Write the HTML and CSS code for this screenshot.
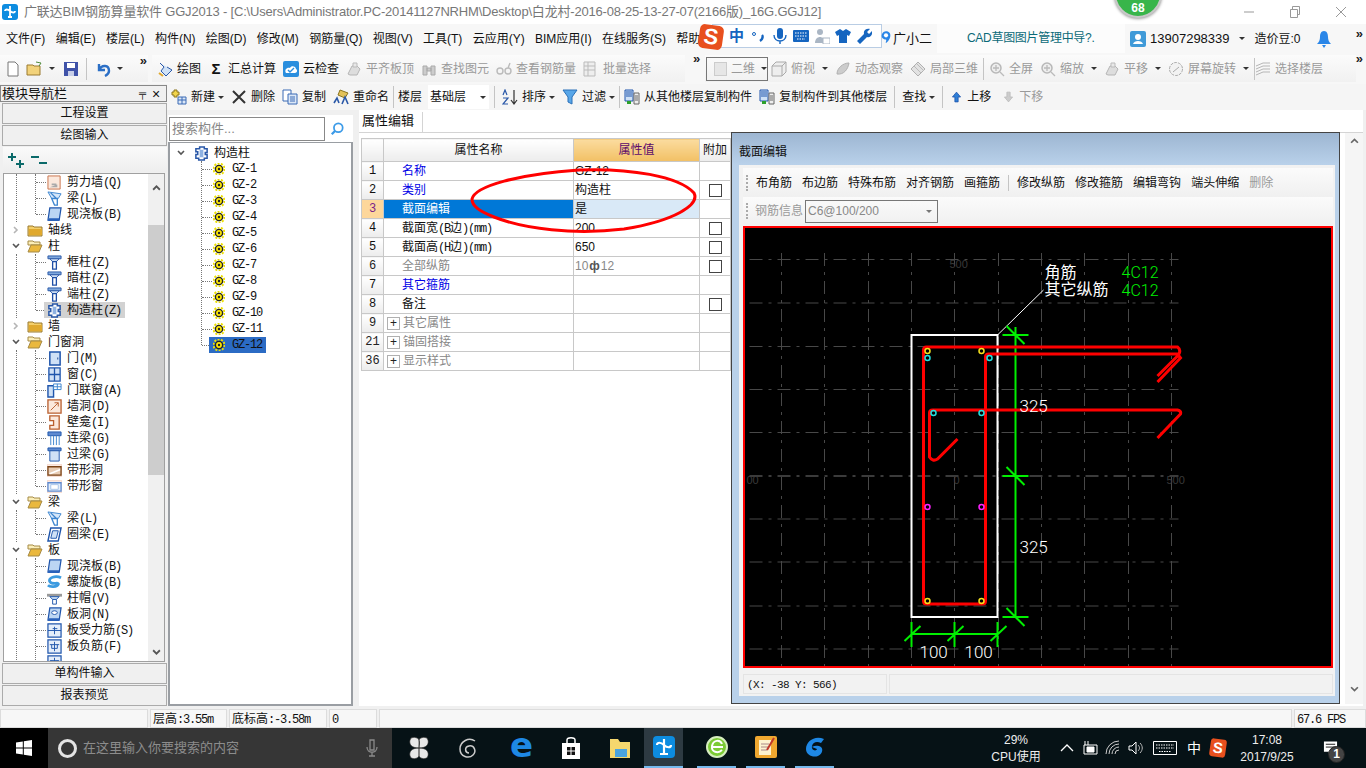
FILE: index.html

```html
<!DOCTYPE html>
<html lang="zh-CN">
<head>
  <meta charset="UTF-8" />
  <title>广联达BIM钢筋算量软件 GGJ2013</title>
  <link rel="stylesheet" href="styles.css">
</head>
<body>
  <!-- shared icons -->
  <svg class="defs" width="0" height="0">
    <symbol id="i-folder" viewBox="0 0 16 16"><path d="M1 4h5l1 1h8v9H1z" fill="#f4cf6a" stroke="#9a7a30"/><path d="M2 7h13v6H2z" fill="#e0a92e"/></symbol>
    <symbol id="i-open" viewBox="0 0 16 16"><path d="M1 3h5l1 1h6v3H1z" fill="#fbeeb8" stroke="#a58a45"/><path d="M1 14l3-7h11l-3 7z" fill="#eab83e" stroke="#a58a45"/></symbol>
    <symbol id="i-col" viewBox="0 0 16 16"><path d="M1 1h14v3H1z" fill="#7fa8dd" stroke="#2a58a8"/><path d="M3 4h10L10 7H6z" fill="#cfe0f5" stroke="#2a58a8"/><path d="M6 7h4v8H6z" fill="#fff" stroke="#1f4fa6" stroke-width="1.4"/></symbol>
    <symbol id="i-gz" viewBox="0 0 16 16"><path d="M6 1h5v2h3v4h-2v2h2v4h-3v2H5v-2H2V9h2V6H2V3h4z" fill="#fff" stroke="#2a58a8" stroke-width="1.6"/><path d="M6 4h4v8H6z" fill="#8fb2e2"/></symbol>
    <symbol id="i-beam" viewBox="0 0 16 16"><path d="M1 1l14 2-3 5H5z" fill="#d6e7f9" stroke="#3d85cf"/><path d="M5 8l3 7h3V8zM4 2l6 6" fill="none" stroke="#3d85cf" stroke-width="1.4"/></symbol>
    <symbol id="i-slab" viewBox="0 0 16 16"><path d="M3 1h12l-2 13H1z" fill="#bcd6f3" stroke="#1f55ac" stroke-width="1.3"/><path d="M2 12h11v3H1z" fill="#2a62bb"/></symbol>
    <symbol id="i-wall" viewBox="0 0 16 16"><path d="M1 1h13v14H1z" fill="#fbe8dc" stroke="#c9714a"/><path d="M3 13l8-3v3zM5 9h5v2H5z" fill="#aaa"/></symbol>
    <symbol id="i-door" viewBox="0 0 16 16"><path d="M3 1h11v14H3z" fill="#cfe1f6" stroke="#1f55ac" stroke-width="1.6"/><path d="M11 7h1v2h-1z" fill="#123f8e"/></symbol>
    <symbol id="i-win" viewBox="0 0 16 16"><path d="M2 1h12v14H2zM8 1v14M2 8h12" fill="#cfe1f6" stroke="#1f55ac" stroke-width="1.4"/></symbol>
    <symbol id="i-dw" viewBox="0 0 16 16"><path d="M1 3h6v12H1z" fill="#cfe1f6" stroke="#1f55ac" stroke-width="1.5"/><path d="M7 1h8v6H7zM11 1v6M7 4h8" fill="#fff" stroke="#3d85cf"/></symbol>
    <symbol id="i-hole" viewBox="0 0 16 16"><path d="M1 1h14v14H1z" fill="#fbe8dc" stroke="#b95f2f" stroke-width="1.4"/><path d="M4 12L12 4M8 4h4v4" fill="none" stroke="#b95f2f"/></symbol>
    <symbol id="i-niche" viewBox="0 0 16 16"><path d="M3 1h10v14H3V11h4V6H3z" fill="#fbe8dc" stroke="#b95f2f" stroke-width="1.4"/></symbol>
    <symbol id="i-link" viewBox="0 0 16 16"><path d="M1 1h14v4H1z" fill="#5d8ad0" stroke="#1f55ac"/><path d="M4 5v10M7 5v10M10 5v10M13 5v10" stroke="#3d85cf" fill="none"/></symbol>
    <symbol id="i-over" viewBox="0 0 16 16"><path d="M1 1h14v3H1z" fill="#5d8ad0" stroke="#1f55ac"/><path d="M3 4h10v11H3z" fill="#cfe1f6" stroke="#1f55ac"/></symbol>
    <symbol id="i-sh" viewBox="0 0 16 16"><path d="M0 2h16v12H0z" fill="#fff" stroke="#f2c8b4"/><path d="M1 4h14v9H1z" fill="#e8cdb5" stroke="#7a4316" stroke-width="1.4"/><path d="M2 11l12-5v2L4 12z" fill="#fff"/></symbol>
    <symbol id="i-sw" viewBox="0 0 16 16"><path d="M0 2h16v12H0z" fill="#fff" stroke="#f2c8b4"/><path d="M1 4h14v9H1z" fill="#e4eefa" stroke="#5d8ad0" stroke-width="1.4"/><path d="M4 6h8v5H4z" fill="#fff" stroke="#a8c4ea"/></symbol>
    <symbol id="i-ring" viewBox="0 0 16 16"><path d="M4 1h11l-3 14H1z" fill="#fff" stroke="#1f55ac" stroke-width="1.5"/><path d="M6 4h6l-2 8H4z" fill="#cfe1f6" stroke="#1f55ac"/></symbol>
    <symbol id="i-spiral" viewBox="0 0 16 16"><path d="M15 3C9 0 1 3 3 7s10 0 9 3-9 3-11 1" fill="none" stroke="#3d9be0" stroke-width="3"/></symbol>
    <symbol id="i-cap" viewBox="0 0 16 16"><path d="M0 3h16v3H0z" fill="#999"/><path d="M3 6h10l-3 3H6z" fill="#cfe1f6" stroke="#1f55ac"/><path d="M6 9h4v5H6z" fill="#fff" stroke="#1f55ac"/></symbol>
    <symbol id="i-shole" viewBox="0 0 16 16"><path d="M3 1h12l-2 13H1z" fill="#bcd6f3" stroke="#1f55ac" stroke-width="1.3"/><ellipse cx="8" cy="6" rx="3" ry="2" fill="#fff" stroke="#1f55ac"/><path d="M2 12h11v3H1z" fill="#2a62bb"/></symbol>
    <symbol id="i-srebar" viewBox="0 0 16 16"><path d="M1 1h14v14H1z" fill="#e4eefa" stroke="#1f55ac" stroke-width="1.3"/><path d="M1 8h14M8 4v8M6 6h5" fill="none" stroke="#1f55ac"/></symbol>
    <symbol id="i-neg" viewBox="0 0 16 16"><path d="M1 1h14v14H1z" fill="#e4eefa" stroke="#1f55ac" stroke-width="1.3"/><path d="M3 6h10M8 3v10M5 6v4h6V6" fill="none" stroke="#1f55ac"/></symbol>
    <symbol id="i-gear" viewBox="0 0 12 12"><circle cx="6" cy="6" r="5.500" fill="none" stroke="#eee000" stroke-width="2" stroke-dasharray="2 1.400"/><circle cx="6" cy="6" r="3.600" fill="#ffe800" stroke="#222" stroke-width="1.400"/><circle cx="6" cy="6" r="1.200" fill="#222"/></symbol>
    <symbol id="i-chev" viewBox="0 0 8 8"><path d="M1 2l3 3 3-3" fill="none" stroke="#555" stroke-width="1.600"/></symbol>
    <symbol id="i-chevr" viewBox="0 0 8 8"><path d="M2 1l3 3-3 3" fill="none" stroke="#b5b5b5" stroke-width="1.600"/></symbol>
    <symbol id="i-ghost" viewBox="0 0 16 16"><path d="M2 13l4-8h5l3 3-3 6H4z" fill="#ddd" stroke="#b5b5b5"/><path d="M7 2h4v4H7z" fill="#e8e8e8" stroke="#bbb"/></symbol>
    <symbol id="i-find" viewBox="0 0 16 16"><circle cx="7" cy="7" r="5" fill="#eee" stroke="#b8b8b8" stroke-width="1.500"/><path d="M11 11l4 4M7 4v6M4 7h6" stroke="#bbb" stroke-width="1.300" fill="none"/></symbol>
    <symbol id="i-copy" viewBox="0 0 16 16"><path d="M1 1h8v11H1z" fill="#cfe1f6" stroke="#1f55ac"/><path d="M2 3h6M2 5h6M2 7h6" stroke="#1f55ac" fill="none"/><path d="M10 4h5v11h-5z" fill="#eee" stroke="#666"/><path d="M11 7h3M11 9h3M11 11h3" stroke="#666" fill="none"/><path d="M3 12h4v3H3z" fill="#2ca02c"/></symbol>
  </svg>

  <div class="titlebar">
    <svg class="app-ico" viewBox="0 0 16 16"><rect width="16" height="16" rx="3" fill="#0d8ce0"/><path d="M8 2v11M3 7c0-2 3-2 5 0s5 2 5 0M6 13h4" fill="none" stroke="#fff" stroke-width="1.800"/></svg>
    <span class="doc-title">广联达BIM钢筋算量软件 GGJ2013 - [C:\Users\Administrator.PC-20141127NRHM\Desktop\白龙村-2016-08-25-13-27-07(2166版)_16G.GGJ12]</span>
    <div class="win-ctrls">
      <svg viewBox="0 0 12 12"><path d="M1 6h10" stroke="#999"/></svg>
      <svg viewBox="0 0 12 12"><path d="M1.500 3.500h7v8h-7zM3.500 3V.5h7v8H9" fill="none" stroke="#999"/></svg>
      <svg viewBox="0 0 12 12"><path d="M1 1l10 10M11 1L1 11" stroke="#999"/></svg>
    </div>
  </div>

  <div class="menubar">
    <div class="menu-items">
      <span>文件(F)</span><span>编辑(E)</span><span>楼层(L)</span><span>构件(N)</span><span>绘图(D)</span><span>修改(M)</span><span>钢筋量(Q)</span><span>视图(V)</span><span>工具(T)</span><span>云应用(Y)</span><span>BIM应用(I)</span><span>在线服务(S)</span><span>帮助</span>
    </div>
    <span class="assist">广小二</span>
    <div class="cad-tab">CAD草图图片管理中导?.</div>
    <div class="account">
      <svg class="ac-ico" viewBox="0 0 16 16"><rect width="16" height="16" rx="2" fill="#3f9ad8"/><circle cx="8" cy="6" r="3" fill="#fff"/><path d="M3 13c1-4 9-4 10 0z" fill="#fff"/></svg>
      <span>13907298339</span><i class="caret"></i><span class="beans">造价豆:0</span>
      <svg class="bell" viewBox="0 0 14 18"><path d="M7 1c3 0 4 3 4 6s1 5 3 7H0c2-2 3-4 3-7s1-6 4-6z" fill="#2a86e8"/><path d="M5 15h4l-2 3z" fill="#2a86e8"/></svg>
    </div>
    <span class="more">»</span>
  </div>

  <div class="tools1">
    <div class="band band-a">
      <svg class="ic" viewBox="0 0 16 16"><path d="M3 1h7l3 3v11H3z" fill="#fff" stroke="#777"/></svg>
      <svg class="ic ic-w" viewBox="0 0 18 16"><path d="M1 4h6l1 1h6v9H1z" fill="#f2d27a" stroke="#9a7a30"/><path d="M10 1l5 1-2 3" fill="none" stroke="#4e8a3a"/></svg>
      <i class="caret"></i>
      <svg class="ic save" viewBox="0 0 16 16"><path d="M1 1h14v14H1z" fill="#3f52a8"/><path d="M4 2h8v5H4z" fill="#fff"/><path d="M5 10h6v5H5z" fill="#c8cfe8"/></svg>
      <b class="sep"></b>
      <svg class="ic" viewBox="0 0 16 16"><path d="M3 3v6h6M3 9c3-6 10-5 10 1 0 3-2 4-4 5" fill="none" stroke="#2b6fc6" stroke-width="2.400"/></svg>
      <i class="caret"></i>
      <span class="more push">»</span>
    </div>
    <div class="band band-b">
      <div class="tb"><svg class="ic" viewBox="0 0 16 16"><path d="M3 2l4 4-3 4 5 5 6-6-5-3" fill="#cfe1f6" stroke="#2a58a8"/><path d="M2 12l4 3" stroke="#e0a92e" stroke-width="2"/></svg>绘图</div>
      <div class="tb"><span class="sigma">Σ</span>汇总计算</div>
      <div class="tb"><svg class="ic" viewBox="0 0 16 16"><rect width="16" height="16" rx="2" fill="#2a8ede"/><path d="M3 12c-2-3 1-6 4-5 1-3 6-2 6 1 2 1 1 4-1 4z" fill="#fff"/><path d="M5 9l2 2 4-4" fill="none" stroke="#2a8ede" stroke-width="1.400"/></svg>云检查</div>
      <div class="tb off"><svg class="ic"><use href="#i-ghost"/></svg>平齐板顶</div>
      <div class="tb off"><svg class="ic" viewBox="0 0 16 16"><path d="M2 5h4v9H2zM10 5h4v9h-4zM6 7h4v3H6z" fill="#ccc" stroke="#aaa"/></svg>查找图元</div>
      <div class="tb off"><svg class="ic" viewBox="0 0 16 16"><path d="M1 10a3 3 0 1 0 6 0 3 3 0 1 0-6 0M9 10a3 3 0 1 0 6 0 3 3 0 1 0-6 0M12 7l2-5" fill="none" stroke="#bbb" stroke-width="1.400"/></svg>查看钢筋量</div>
      <div class="tb off"><svg class="ic" viewBox="0 0 16 16"><path d="M1 1h11v14H1zM1 5h11M1 9h11M5 1v14" fill="#eee" stroke="#bbb"/></svg>批量选择</div>
    </div>
    <span class="more more-mid">»</span>
    <div class="band band-c">
      <div class="view-combo"><i class="swatch"></i><span>二维</span><i class="caret"></i></div>
      <div class="tb off"><svg class="ic" viewBox="0 0 16 16"><path d="M1 5l4-4h10v10l-4 4H1zM1 5h10v10M11 5l4-4" fill="#eee" stroke="#aaa"/></svg>俯视</div><i class="caret"></i>
      <div class="tb off"><svg class="ic" viewBox="0 0 16 16"><path d="M2 13c0-6 6-11 12-11-1 6-5 12-12 11z" fill="#ccc" stroke="#b0b0b0"/></svg>动态观察</div>
      <div class="tb off"><svg class="ic" viewBox="0 0 16 16"><path d="M1 8l7-7 7 7-7 7z" fill="#e2e2e2" stroke="#b0b0b0"/><path d="M4 5l7 7M7 3l7 7" stroke="#bbb"/></svg>局部三维</div>
      <b class="sep"></b>
      <div class="tb off"><svg class="ic"><use href="#i-find"/></svg>全屏</div>
      <div class="tb off"><svg class="ic"><use href="#i-find"/></svg>缩放</div><i class="caret"></i>
      <div class="tb off"><svg class="ic"><use href="#i-ghost"/></svg>平移</div><i class="caret"></i>
      <div class="tb off"><svg class="ic" viewBox="0 0 16 16"><circle cx="8" cy="8" r="6.500" fill="#f2f2f2" stroke="#aaa" stroke-dasharray="3 1"/><path d="M5 11l6-5" stroke="#aaa"/></svg>屏幕旋转</div><i class="caret"></i>
      <b class="sep sep-end"></b>
      <div class="tb off"><svg class="ic" viewBox="0 0 16 16"><path d="M1 5l7-3h7M1 8l7-3h7M1 11l7-3h7M1 14l7-3h7" fill="none" stroke="#b5b5b5"/></svg>选择楼层</div>
    </div>
    <span class="more more-end">»</span>
  </div>

  <div class="main">
    <aside class="nav">
      <div class="nav-head"><span>模块导航栏</span><span class="nav-pin">╤</span><span class="nav-x">×</span></div>
      <div class="nav-btn">工程设置</div>
      <div class="nav-btn">绘图输入</div>
      <div class="nav-tools">
        <svg viewBox="0 0 16 16"><path d="M4 1v8M0 5h8M12 8v8M8 12h8" stroke="#0b6a6a" stroke-width="2" fill="none"/></svg>
        <svg viewBox="0 0 16 16"><path d="M0 5h8M8 11h8" stroke="#0b6a6a" stroke-width="2" fill="none"/></svg>
      </div>
      <div class="nav-tree">
        <div class="kids kids-cut">
          <div class="leaf"><svg class="ic"><use href="#i-wall"/></svg><span>剪力墙<em>(Q)</em></span></div>
          <div class="leaf"><svg class="ic"><use href="#i-beam"/></svg><span>梁<em>(L)</em></span></div>
          <div class="leaf"><svg class="ic"><use href="#i-slab"/></svg><span>现浇板<em>(B)</em></span></div>
        </div>
        <div class="node"><svg class="chev"><use href="#i-chevr"/></svg><svg class="ic"><use href="#i-folder"/></svg>轴线</div>
        <div class="node"><svg class="chev"><use href="#i-chev"/></svg><svg class="ic"><use href="#i-open"/></svg>柱</div>
        <div class="kids">
          <div class="leaf"><svg class="ic"><use href="#i-col"/></svg><span>框柱<em>(Z)</em></span></div>
          <div class="leaf"><svg class="ic"><use href="#i-col"/></svg><span>暗柱<em>(Z)</em></span></div>
          <div class="leaf"><svg class="ic"><use href="#i-col"/></svg><span>端柱<em>(Z)</em></span></div>
          <div class="leaf sel"><svg class="ic"><use href="#i-gz"/></svg><span>构造柱<em>(Z)</em></span></div>
        </div>
        <div class="node"><svg class="chev"><use href="#i-chevr"/></svg><svg class="ic"><use href="#i-folder"/></svg>墙</div>
        <div class="node"><svg class="chev"><use href="#i-chev"/></svg><svg class="ic"><use href="#i-open"/></svg>门窗洞</div>
        <div class="kids">
          <div class="leaf"><svg class="ic"><use href="#i-door"/></svg><span>门<em>(M)</em></span></div>
          <div class="leaf"><svg class="ic"><use href="#i-win"/></svg><span>窗<em>(C)</em></span></div>
          <div class="leaf"><svg class="ic"><use href="#i-dw"/></svg><span>门联窗<em>(A)</em></span></div>
          <div class="leaf"><svg class="ic"><use href="#i-hole"/></svg><span>墙洞<em>(D)</em></span></div>
          <div class="leaf"><svg class="ic"><use href="#i-niche"/></svg><span>壁龛<em>(I)</em></span></div>
          <div class="leaf"><svg class="ic"><use href="#i-link"/></svg><span>连梁<em>(G)</em></span></div>
          <div class="leaf"><svg class="ic"><use href="#i-over"/></svg><span>过梁<em>(G)</em></span></div>
          <div class="leaf"><svg class="ic"><use href="#i-sh"/></svg><span>带形洞</span></div>
          <div class="leaf"><svg class="ic"><use href="#i-sw"/></svg><span>带形窗</span></div>
        </div>
        <div class="node"><svg class="chev"><use href="#i-chev"/></svg><svg class="ic"><use href="#i-open"/></svg>梁</div>
        <div class="kids">
          <div class="leaf"><svg class="ic"><use href="#i-beam"/></svg><span>梁<em>(L)</em></span></div>
          <div class="leaf"><svg class="ic"><use href="#i-ring"/></svg><span>圈梁<em>(E)</em></span></div>
        </div>
        <div class="node"><svg class="chev"><use href="#i-chev"/></svg><svg class="ic"><use href="#i-open"/></svg>板</div>
        <div class="kids kids-open">
          <div class="leaf"><svg class="ic"><use href="#i-slab"/></svg><span>现浇板<em>(B)</em></span></div>
          <div class="leaf"><svg class="ic"><use href="#i-spiral"/></svg><span>螺旋板<em>(B)</em></span></div>
          <div class="leaf"><svg class="ic"><use href="#i-cap"/></svg><span>柱帽<em>(V)</em></span></div>
          <div class="leaf"><svg class="ic"><use href="#i-shole"/></svg><span>板洞<em>(N)</em></span></div>
          <div class="leaf"><svg class="ic"><use href="#i-srebar"/></svg><span>板受力筋<em>(S)</em></span></div>
          <div class="leaf"><svg class="ic"><use href="#i-neg"/></svg><span>板负筋<em>(F)</em></span></div>
          <div class="leaf"><svg class="ic"><use href="#i-neg"/></svg></div>
        </div>
        <div class="nav-scroll">
          <svg viewBox="0 0 8 8"><path d="M1 6l3-3 3 3" fill="none" stroke="#555" stroke-width="1.600"/></svg>
          <div class="thumb"></div>
          <svg viewBox="0 0 8 8"><path d="M1 2l3 3 3-3" fill="none" stroke="#555" stroke-width="1.600"/></svg>
        </div>
      </div>
      <div class="nav-btn">单构件输入</div>
      <div class="nav-btn">报表预览</div>
    </aside>

    <div class="work">
      <div class="tools2">
        <div class="tb"><svg class="ic" viewBox="0 0 16 16"><path d="M3 1h3v2h2v3H6v2H3V6H1V3h2z" fill="#f1d44b" stroke="#8a7420"/><path d="M7 8h8v7H7zM7 11h8M11 8v7" fill="#dbe7f7" stroke="#3a6bb5"/></svg>新建</div><i class="caret"></i>
        <div class="tb"><svg class="ic" viewBox="0 0 16 16"><path d="M2 2l12 12M14 2L2 14" stroke="#333" stroke-width="2"/></svg>删除</div>
        <div class="tb"><svg class="ic" viewBox="0 0 16 16"><path d="M1 1h8v11H1z" fill="#fff" stroke="#3a6bb5"/><path d="M6 5h9v10H6z" fill="#dbe7f7" stroke="#3a6bb5"/><path d="M8 8h5M8 10h5M8 12h5" stroke="#3a6bb5"/></svg>复制</div>
        <div class="tb"><svg class="ic" viewBox="0 0 16 16"><path d="M7 1l8 3-3 5-7-3z" fill="#e3c25a" stroke="#8a7420"/><path d="M1 14l3-5 2 5M9 15l3-7 3 7" fill="none" stroke="#2a58a8" stroke-width="1.600"/></svg>重命名</div>
        <b class="sep tight"></b>
        <span>楼层</span>
        <div class="floor-combo"><span>基础层</span><i class="caret"></i></div>
        <b class="sep"></b>
        <div class="tb"><svg class="ic" viewBox="0 0 16 16"><path d="M1 6l2-5 2 5M1 9h5L1 15h5" fill="none" stroke="#2a58a8" stroke-width="1.200"/><path d="M12 1v13M9 11l3 4 3-4" fill="none" stroke="#333" stroke-width="1.200"/></svg>排序</div><i class="caret"></i>
        <div class="tb"><svg class="ic" viewBox="0 0 16 16"><path d="M1 1h14L10 8v7l-4-2V8z" fill="#58a6e8" stroke="#2a70b8"/></svg>过滤</div><i class="caret"></i>
        <b class="sep tight"></b>
        <div class="tb"><svg class="ic"><use href="#i-copy"/></svg>从其他楼层复制构件</div>
        <div class="tb"><svg class="ic"><use href="#i-copy"/></svg>复制构件到其他楼层</div>
        <b class="sep"></b>
        <span>查找</span><i class="caret"></i>
        <b class="sep"></b>
        <div class="tb"><svg class="ic ic-arrow" viewBox="0 0 16 16"><path d="M8 2l5 6h-3v6H6V8H3z" fill="#2f7fd6" stroke="#1f55ac"/></svg>上移</div>
        <div class="tb off down"><svg class="ic ic-arrow" viewBox="0 0 16 16"><path d="M8 14l5-6h-3V2H6v6H3z" fill="#ccc" stroke="#bbb"/></svg>下移</div>
      </div>

      <div class="panels">
        <section class="parts">
          <div class="search">
            <span class="search-box">搜索构件...</span>
            <svg class="search-ico" viewBox="0 0 16 16"><circle cx="9.500" cy="6.500" r="5" fill="none" stroke="#3c9be8" stroke-width="2"/><path d="M6 10l-4 4" stroke="#3c9be8" stroke-width="2.600"/></svg>
          </div>
          <div class="part-tree">
            <div class="root"><svg class="chev"><use href="#i-chev"/></svg><svg class="ic"><use href="#i-gz"/></svg>构造柱</div>
            <div class="part-kids">
              <div class="gz"><svg class="gear"><use href="#i-gear"/></svg><span>GZ-1</span></div>
              <div class="gz"><svg class="gear"><use href="#i-gear"/></svg><span>GZ-2</span></div>
              <div class="gz"><svg class="gear"><use href="#i-gear"/></svg><span>GZ-3</span></div>
              <div class="gz"><svg class="gear"><use href="#i-gear"/></svg><span>GZ-4</span></div>
              <div class="gz"><svg class="gear"><use href="#i-gear"/></svg><span>GZ-5</span></div>
              <div class="gz"><svg class="gear"><use href="#i-gear"/></svg><span>GZ-6</span></div>
              <div class="gz"><svg class="gear"><use href="#i-gear"/></svg><span>GZ-7</span></div>
              <div class="gz"><svg class="gear"><use href="#i-gear"/></svg><span>GZ-8</span></div>
              <div class="gz"><svg class="gear"><use href="#i-gear"/></svg><span>GZ-9</span></div>
              <div class="gz"><svg class="gear"><use href="#i-gear"/></svg><span>GZ-10</span></div>
              <div class="gz"><svg class="gear"><use href="#i-gear"/></svg><span>GZ-11</span></div>
              <div class="gz sel"><svg class="gear"><use href="#i-gear"/></svg><span>GZ-12</span></div>
            </div>
          </div>
        </section>

        <section class="props">
          <div class="tabs"><span class="tab">属性编辑</span></div>
          <div class="prop-body">
            <table class="prop-table">
              <colgroup><col class="c-num"><col class="c-name"><col class="c-val"><col class="c-add"></colgroup>
              <tr class="head"><th></th><th>属性名称</th><th class="val-head">属性值</th><th>附加</th></tr>
              <tr><td class="num">1</td><td class="name link">名称</td><td class="val">GZ-12</td><td></td></tr>
              <tr><td class="num">2</td><td class="name link">类别</td><td class="val">构造柱</td><td class="add"><i class="check"></i></td></tr>
              <tr class="cur"><td class="num">3</td><td class="name">截面编辑</td><td class="val">是</td><td></td></tr>
              <tr><td class="num">4</td><td class="name">截面宽<em>(B</em>边<em>)(mm)</em></td><td class="val">200</td><td class="add"><i class="check"></i></td></tr>
              <tr><td class="num">5</td><td class="name">截面高<em>(H</em>边<em>)(mm)</em></td><td class="val">650</td><td class="add"><i class="check"></i></td></tr>
              <tr class="dim"><td class="num">6</td><td class="name">全部纵筋</td><td class="val">10<span class="bar-sym">ф</span>12</td><td class="add"><i class="check"></i></td></tr>
              <tr><td class="num">7</td><td class="name link">其它箍筋</td><td class="val"></td><td></td></tr>
              <tr><td class="num">8</td><td class="name">备注</td><td class="val"></td><td class="add"><i class="check"></i></td></tr>
              <tr class="dim"><td class="num">9</td><td class="name group"><i class="plus">+</i>其它属性</td><td class="val"></td><td></td></tr>
              <tr class="dim"><td class="num">21</td><td class="name group"><i class="plus">+</i>锚固搭接</td><td class="val"></td><td></td></tr>
              <tr class="dim"><td class="num">36</td><td class="name group"><i class="plus">+</i>显示样式</td><td class="val"></td><td></td></tr>
            </table>
            <div class="prop-scroll">
              <svg viewBox="0 0 8 8"><path d="M1 6l3-3 3 3" fill="none" stroke="#666" stroke-width="1.500"/></svg>
              <svg viewBox="0 0 8 8"><path d="M1 2l3 3 3-3" fill="none" stroke="#666" stroke-width="1.500"/></svg>
            </div>
          </div>
        </section>
      </div>
    </div>
  </div>

  <div class="status">
    <span class="st st-a"></span>
    <span class="st st-b">层高<em>:3.55m</em></span>
    <span class="st st-c">底标高<em>:-3.58m</em></span>
    <span class="st st-d"><em>0</em></span>
    <span class="st st-e"></span>
    <span class="st st-f"><em>67.6 FPS</em></span>
  </div>

  <div class="taskbar">
    <div class="start"><svg viewBox="0 0 16 16"><path d="M0 2.500l6.800-1v6H0zM7.800 1.300L16 0v7.500H7.800zM0 8.500h6.800v6l-6.800-1zM7.800 8.500H16V16l-8.200-1.200z" fill="#fff"/></svg></div>
    <div class="task-search">
      <i class="cortana"></i>
      <span>在这里输入你要搜索的内容</span>
      <svg class="mic" viewBox="0 0 12 18"><path d="M4 1h4v10H4zM1 8c0 7 10 7 10 0M6 14v3M3 17h6" fill="none" stroke="#8a8a8a" stroke-width="1.300"/></svg>
    </div>
    <div class="task-apps">
      <div class="app"><svg viewBox="0 0 24 24"><path d="M12 12C4 12 2 8 3 4s8-3 9 0 0 5 0 8zm0 0c8 0 10-4 9-8s-8-3-9 0zm0 0c-8 0-10 4-9 8s8 3 9 0zm0 0c8 0 10 4 9 8s-8 3-9 0z" fill="#e8e8e8" stroke="#222" stroke-width=".6"/></svg></div>
      <div class="app"><svg viewBox="0 0 24 24"><path d="M19 5C13 1 4 5 4 13s9 10 13 6 1-10-4-9-4 7 0 7" fill="none" stroke="#ccc" stroke-width="1.500"/></svg></div>
      <div class="app edge">e</div>
      <div class="app"><svg viewBox="0 0 24 24"><path d="M3 7h18v16H3z" fill="#fff"/><path d="M8 8V4c0-3 8-3 8 0v4" fill="none" stroke="#fff" stroke-width="1.500"/><path d="M8 11h3.500v3.500H8zM12.500 11H16v3.500h-3.500zM8 15.500h3.500V19H8zM12.500 15.500H16V19h-3.500z" fill="#111"/></svg></div>
      <div class="app"><svg viewBox="0 0 24 24"><path d="M2 3h8l2 3h10v16H2z" fill="#f5d76e"/><path d="M7 13h12v8H7z" fill="#4aa3df"/></svg></div>
      <div class="app active"><svg viewBox="0 0 24 24"><rect x="1" y="1" width="22" height="22" rx="4" fill="#0d8ce0"/><path d="M12 4v15M5 10c0-3 4-3 7 0s7 3 7 0M8 19h8" fill="none" stroke="#fff" stroke-width="2.200"/></svg></div>
      <div class="app run first-run"><svg viewBox="0 0 24 24"><circle cx="12" cy="12" r="10" fill="#7ccb35" stroke="#d6eec0" stroke-width="2"/><path d="M6 12h12M17 9c-2-5-9-4-10 2s6 8 10 4" fill="none" stroke="#fff" stroke-width="2"/></svg></div>
      <div class="app run"><svg viewBox="0 0 24 24"><rect x="1" y="1" width="22" height="22" rx="2" fill="#f0a830"/><path d="M5 5h12v15H5z" fill="#fdf3d0"/><path d="M7 9h8M7 12h8M7 15h6" stroke="#a88" fill="none"/><path d="M20 3l-7 12" stroke="#c0392b" stroke-width="2"/></svg></div>
      <div class="app run"><svg viewBox="0 0 24 24"><path d="M21 4C12 0 3 6 3 14c0 6 7 9 12 7s6-9 1-10-7 1-7 1l5 2c-1 3-6 1-5-3s5-5 9-3z" fill="#1e88e5"/></svg></div>
    </div>
    <div class="cpu"><span>29%</span><span>CPU使用</span></div>
    <div class="tray">
      <svg viewBox="0 0 16 16"><path d="M2 11l6-6 6 6" fill="none" stroke="#fff" stroke-width="1.300"/></svg>
      <svg viewBox="0 0 16 16"><path d="M2 5h13v9H2z" fill="none" stroke="#fff"/><path d="M5 7h7v5H5zM3 1v4M6 1v4" fill="#fff" stroke="#fff"/></svg>
      <svg viewBox="0 0 16 16"><path d="M1 14a13 13 0 0 1 13-13M4 14a10 10 0 0 1 10-10M7 14a7 7 0 0 1 7-7M10 14a4 4 0 0 1 4-4" fill="none" stroke="#ccc"/></svg>
      <svg viewBox="0 0 16 16"><path d="M1 6h3l4-4v12l-4-4H1z" fill="none" stroke="#fff"/><path d="M10 5c2 2 2 4 0 6M12 3c3 3 3 7 0 10" fill="none" stroke="#bbb"/></svg>
      <svg class="kbd" viewBox="0 0 24 16"><path d="M.5 1.500h23v13H.5z" fill="none" stroke="#fff"/><path d="M3 5h18M3 8h18M6 11.500h12" stroke="#fff" stroke-dasharray="1.500 1"/></svg>
      <span class="tray-ime">中</span>
      <span class="sogou sogou-sm">S</span>
    </div>
    <div class="clock"><span>17:08</span><span>2017/9/25</span></div>
    <div class="notify">
      <svg viewBox="0 0 16 16"><path d="M1 1h14v11H9l-3 3v-3H1z" fill="#fff"/><path d="M3 4h10M3 7h10" stroke="#111"/></svg>
      <span class="badge">1</span>
    </div>
  </div>

  <!-- things that float over the main window -->
  <div class="score-ball">68</div>

  <div class="ime">
    <span class="sogou">S</span>
    <span class="ime-zh">中</span>
    <svg viewBox="0 0 16 16"><circle cx="3" cy="6" r="1.500" fill="none" stroke="#1565c0"/><path d="M11 7c1 1 1 4-2 6" fill="none" stroke="#1565c0" stroke-width="2.400"/></svg>
    <svg viewBox="0 0 16 16"><rect x="5" y="0" width="6" height="11" rx="3" fill="#1565c0"/><path d="M2 7c0 8 12 8 12 0M8 13v3" fill="none" stroke="#1565c0" stroke-width="1.400"/></svg>
    <svg viewBox="0 0 16 16"><rect y="2" width="16" height="12" rx="1" fill="#1565c0"/><path d="M2 5h12M2 8h12M4 11h8" stroke="#fff" stroke-dasharray="1.500 1"/></svg>
    <svg viewBox="0 0 16 16"><circle cx="6" cy="4" r="3" fill="#aab6c4"/><path d="M1 15c0-8 10-8 10 0z" fill="#aab6c4"/><rect x="9" y="10" width="7" height="6" fill="#fff" stroke="#aab6c4"/></svg>
    <svg viewBox="0 0 16 16"><path d="M5 1l3 2 3-2 5 3-2 4-2-1v8H4V7L2 8 0 4z" fill="#1565c0"/></svg>
    <svg viewBox="0 0 16 16"><path d="M1 13l7-7c-1-4 3-6 6-5l-3 3 2 2 3-3c1 4-2 7-5 6l-7 7z" fill="#1565c0"/></svg>
  </div>
  <svg class="assist-ico" viewBox="0 0 12 16"><path d="M6 1c4 0 6 3 5 7s-4 7-5 7 1-3 0-4C2 11 0 8 1 5s3-4 5-4z" fill="#2a86e8"/><circle cx="6" cy="6" r="2.500" fill="#fff"/></svg>

  <svg class="ring" viewBox="0 0 232 70"><path d="M3 33C6 20 50 8 110 4c50-2 100 6 115 23 6 12-20 28-70 36-50 6-100 0-130-12C10 45 3 40 3 33z" fill="none" stroke="#f00" stroke-width="3"/></svg>

  <div class="sec-win">
    <div class="sec-title">截面编辑</div>
    <div class="sec-inner">
      <div class="sec-tools">
        <i class="grip"></i>
        <span>布角筋</span><span>布边筋</span><span>特殊布筋</span><span>对齐钢筋</span><span>画箍筋</span><b class="sep"></b><span>修改纵筋</span><span>修改箍筋</span><span>编辑弯钩</span><span>端头伸缩</span><span class="off">删除</span>
      </div>
      <div class="sec-info">
        <i class="grip"></i>
        <span class="off">钢筋信息</span>
        <div class="rebar-combo"><span>C6@100/200</span><i class="caret"></i></div>
      </div>
      <div class="sec-canvas">
        <svg class="cad" viewBox="745 228 585 438">
          <path class="grid" d="M749 259.500H1178M749 303H1178M749 346.500H1178M749 389.500H1178M749 432.500H1178M749 519H1178M749 562H1178M749 606H1178M749 649H1178M781 253V666M824 253V666M868 253V666M911 253V666M954 253V666M998 253V666M1041 253V666M1084 253V666M1128 253V666M1171 253V666"/>
          <path class="axis" d="M749 476H1178"/>
          <text class="cad-grey" x="949" y="268">500</text>
          <text class="cad-grey" x="953" y="484">0</text>
          <text class="cad-grey" x="1166" y="484">500</text>
          <text class="cad-grey" x="746" y="484">00</text>

          <path class="outline" d="M911 335H997V617H911z"/>
          <path class="leader" d="M997 335L1043 290"/>
          <path class="dim-line" d="M1015 327V617M1002 335H1028M1006 326L1024 344M1002 476H1028M1006 467L1024 485M1002 617H1028M1006 608L1024 626M911 634H997M911 622V647M954 622V647M997 622V647M904 641L920 626M947 641L963 626M990 641L1006 626"/>

          <path class="rebar" d="M1157 376L1178 355Q1181 350 1177 347H926Q923 347 923 350V601Q923 604 926 604H982Q985 604 985 601V357Q985 354 988 354H1177L1180 358L1157 382"/>
          <path class="rebar" d="M957 439L937 459Q932 462 929 457V413Q929 410 932 410H1177Q1181 411 1180 414L1157 438"/>

          <g class="pin yellow"><circle cx="927" cy="351" r="2.500"/><circle cx="981" cy="351" r="2.500"/><circle cx="927" cy="601" r="2.500"/><circle cx="981" cy="601" r="2.500"/></g>
          <g class="pin cyan"><circle cx="927" cy="358" r="2.500"/><circle cx="989" cy="358" r="2.500"/><circle cx="933" cy="413" r="2.500"/><circle cx="981" cy="413" r="2.500"/></g>
          <g class="pin magenta"><circle cx="927" cy="507" r="2.500"/><circle cx="981" cy="507" r="2.500"/></g>

          <text class="cad-white" x="1044" y="278">角筋</text>
          <text class="cad-white" x="1044" y="295">其它纵筋</text>
          <text class="cad-green" x="1121" y="278">4C12</text>
          <text class="cad-green" x="1121" y="296">4C12</text>
          <text class="cad-num" x="1019" y="412">325</text>
          <text class="cad-num" x="1019" y="553">325</text>
          <text class="cad-num" x="919" y="658">100</text>
          <text class="cad-num" x="964" y="658">100</text>
        </svg>
      </div>
      <div class="sec-status">
        <span class="coord">(X: -38 Y: 566)</span>
        <span class="coord-rest"></span>
      </div>
    </div>
  </div>
</body>
</html>
```

FILE: styles.css

```css
html, body {
  margin: 0;
  padding: 0;
  height: 768px;
  overflow: hidden;
}
body {
  position: relative;
  display: flex;
  flex-direction: column;
  background-color: #f0f0f0;
  color: #111;
  font-family: "Liberation Sans", "Noto Sans CJK SC", sans-serif;
  font-size: 12px;
  line-height: 16px;
}
.defs {
  position: absolute;
}
i {
  font-style: normal;
}
/* half width latin, the app draws these with a bitmap font */
em {
  font-style: normal;
  font-family: "Liberation Mono", monospace;
  letter-spacing: -1.2px;
}
.ic {
  width: 16px;
  height: 16px;
  flex: none;
}
.off {
  color: #9a9a9a;
}
.sep {
  width: 1px;
  height: 22px;
  background-color: #c4c4c4;
  flex: none;
}
.caret {
  width: 0;
  height: 0;
  flex: none;
  border-left: 3px solid transparent;
  border-right: 3px solid transparent;
  border-top: 3px solid #333;
}
.more {
  font-size: 13px;
  font-weight: bold;
  line-height: 12px;
  color: #222;
  align-self: flex-start;
}

/* title and menu */
.titlebar {
  height: 24px;
  flex: none;
  display: flex;
  align-items: center;
  background-color: #fff;
  padding-left: 2px;
}
.app-ico {
  width: 16px;
  height: 16px;
  flex: none;
}
.doc-title {
  margin-left: 6px;
  color: #777;
  font-size: 13px;
  letter-spacing: -0.19px;
  white-space: nowrap;
}
.win-ctrls {
  margin-left: auto;
  display: flex;
  gap: 34px;
  padding-right: 19px;
}
.win-ctrls svg {
  width: 12px;
  height: 12px;
}
.menubar {
  height: 29px;
  flex: none;
  display: flex;
  align-items: center;
  padding-left: 6px;
  background-color: #f7f7f7;
}
.menu-items {
  display: flex;
  gap: 10.3px;
  width: 887px;
  white-space: nowrap;
}
.assist {
  width: 44px;
  flex: none;
  font-size: 13px;
}
.cad-tab {
  width: 188px;
  height: 29px;
  flex: none;
  box-sizing: border-box;
  padding: 6px 0 0 30px;
  background-color: #fcfcfc;
  color: #0b6a78;
  letter-spacing: -0.3px;
}
.account {
  display: flex;
  align-items: center;
  gap: 4px;
  margin-left: 5px;
  font-size: 13px;
}
.ac-ico {
  width: 16px;
  height: 16px;
}
.account .caret {
  margin: 0 6px 0 5px;
}
.beans {
  font-size: 12px;
}
.bell {
  width: 14px;
  height: 18px;
  margin-left: 12px;
}
.menubar > .more {
  margin-left: auto;
  margin-top: 4px;
  padding-right: 3px;
}

/* toolbars */
.tools1 {
  height: 31px;
  flex: none;
  display: flex;
  align-items: center;
  background-color: #f7f7f7;
  white-space: nowrap;
}
.band {
  height: 27px;
  display: flex;
  align-items: center;
  gap: 7px;
  background: linear-gradient(#fbfbfb, #f1f1f1);
}
.band-a {
  width: 143px;
  padding-left: 5px;
  gap: 5px;
  margin-right: 4px;
}
.ic-w {
  width: 18px;
}
.save {
  margin-left: 3px;
}
.band-a .sep {
  margin: 0 4px 0 2px;
}
.push {
  margin-left: auto;
  margin-right: 1px;
}
.band-b {
  padding-left: 5px;
  width: 528px;
}
.more-mid {
  width: 11px;
  margin-left: 8px;
}
.band-c {
  margin-left: 1px;
  flex: 1;
  background: linear-gradient(#fbfbfb, #f1f1f1);
  padding-left: 1px;
}
.band-c .sep {
  margin: 0 -2px;
}
.band-c .sep-end {
  margin: 0 -7px 0 -2px;
}
.tb {
  display: flex;
  align-items: center;
  gap: 4px;
  flex: none;
}
.sigma {
  width: 16px;
  font-size: 15px;
  font-weight: bold;
  text-align: center;
}
.view-combo {
  width: 62px;
  height: 24px;
  box-sizing: border-box;
  display: flex;
  align-items: center;
  gap: 4px;
  padding-left: 7px;
  border: 1px solid #777;
  color: #999;
  flex: none;
  margin-right: -4px;
}
.swatch {
  width: 13px;
  height: 12px;
  background-color: #e6e6e6;
  border: 1px solid #ccc;
}
.view-combo .caret {
  margin-left: 2px;
}
.more-end {
  margin-right: 3px;
  margin-left: 0;
}
.tools2 {
  height: 26px;
  flex: none;
  display: flex;
  align-items: center;
  gap: 7px;
  padding-left: 4px;
  background-color: #f5f5f5;
  white-space: nowrap;
}
.tools2 .caret {
  margin-left: -4px;
}
.tools2 .sep.tight {
  margin: 0 -3px;
}
.ic-arrow {
  width: 13px;
}
.down {
  margin-left: 4px;
}
.floor-combo {
  width: 61px;
  height: 24px;
  box-sizing: border-box;
  display: flex;
  align-items: center;
  justify-content: space-between;
  padding: 0 3px 0 2px;
  background-color: #fff;
  margin: 0 -2px 0 -1px;
}
.floor-combo .caret {
  margin-left: 0;
}

/* main */
.main {
  flex: 1;
  display: flex;
  min-height: 0;
}
.nav {
  width: 167px;
  flex: none;
  display: flex;
  flex-direction: column;
  gap: 1px;
  padding: 1px 0 2px;
  box-sizing: border-box;
  white-space: nowrap;
}
.nav-head {
  height: 17px;
  flex: none;
  display: flex;
  align-items: center;
  border: 1px solid #888;
  box-sizing: border-box;
  font-size: 13px;
  padding-left: 1px;
}
.nav-pin {
  margin-left: auto;
  font-size: 10px;
}
.nav-x {
  width: 20px;
  text-align: center;
  font-size: 14px;
}
.nav-btn {
  height: 21px;
  flex: none;
  margin-left: 2px;
  box-sizing: border-box;
  border: 1px solid #ababab;
  background-color: #f0f0f0;
  text-align: center;
  line-height: 19px;
}
.nav-tools {
  height: 25px;
  flex: none;
  margin-left: 3px;
  display: flex;
  align-items: center;
  gap: 7px;
  padding-left: 5px;
  background: linear-gradient(#fafafa, #eee);
}
.nav-tools svg {
  width: 16px;
  height: 16px;
}
.nav-tree {
  flex: 1;
  min-height: 0;
  position: relative;
  overflow: hidden;
  margin: 0 2px 0 3px;
  border: 1px solid #a0a0a0;
  background-color: #fff;
}
.node {
  height: 16px;
  display: flex;
  align-items: center;
  padding-left: 8px;
}
.chev {
  width: 8px;
  height: 8px;
  flex: none;
  margin-right: 7px;
}
.node .ic {
  margin-right: 5px;
}
.kids {
  position: relative;
  margin-left: 31px;
  border-left: 1px dotted #777;
}
.kids::before {
  content: "";
  position: absolute;
  left: -20px;
  top: 0;
  bottom: 0;
  border-left: 1px dotted #777;
}
.kids::after {
  content: "";
  position: absolute;
  left: -1px;
  bottom: 0;
  width: 1px;
  height: 7px;
  background-color: #fff;
}
.kids-open::after {
  display: none;
}
.kids-open {
  padding-bottom: 16px;
}
.leaf {
  position: relative;
  height: 16px;
  display: flex;
  align-items: center;
  gap: 5px;
  padding-left: 11px;
}
.leaf .ic {
  width: 15px;
  height: 15px;
}
.leaf::before,
.gz::before {
  content: "";
  position: absolute;
  left: 0;
  top: 8px;
  width: 10px;
  border-top: 1px dotted #777;
}
.leaf.sel {
  margin-left: 8px;
  padding: 0 6px 0 3px;
  width: 72px;
  background-color: #d2d2d2;
}
.leaf.sel::before {
  left: -8px;
  width: 8px;
}
.nav-scroll {
  position: absolute;
  right: 0;
  top: 0;
  bottom: 0;
  width: 16px;
  display: flex;
  flex-direction: column;
  align-items: center;
  background-color: #f0f0f0;
}
.nav-scroll svg {
  width: 9px;
  height: 9px;
  flex: none;
  margin: 9px 0 0;
}
.nav-scroll svg:last-child {
  margin: auto 0 4px;
}
.thumb {
  width: 16px;
  height: 250px;
  background-color: #cdcdcd;
  margin-top: 33px;
}

.work {
  flex: 1;
  min-width: 0;
  display: flex;
  flex-direction: column;
}
.panels {
  flex: 1;
  min-height: 0;
  display: flex;
  gap: 6px;
  padding-bottom: 2px;
}

/* parts list */
.parts {
  width: 185px;
  margin-left: 1px;
  flex: none;
  display: flex;
  flex-direction: column;
  padding-top: 5px;
  box-sizing: border-box;
}
.search {
  height: 27px;
  flex: none;
  display: flex;
  align-items: center;
  background-color: #fff;
  padding: 0 0 0 1px;
}
.search-box {
  width: 156px;
  height: 24px;
  box-sizing: border-box;
  border: 1px solid #888;
  padding: 3px 0 0 2px;
  color: #888;
  font-size: 13px;
}
.search-ico {
  width: 14px;
  height: 14px;
  margin-left: 5px;
}
.part-tree {
  flex: 1;
  min-height: 0;
  border: 2px solid #9a9ea3;
  border-top-width: 1px;
  background-color: #fff;
  padding-top: 2px;
  white-space: nowrap;
}
.root {
  height: 16px;
  display: flex;
  align-items: center;
  padding-left: 7px;
}
.root .chev {
  margin-right: 9px;
}
.root .ic {
  width: 15px;
  height: 15px;
  margin-right: 5px;
}
.part-kids {
  position: relative;
  margin-left: 31px;
  border-left: 1px dotted #777;
}
.part-kids::after {
  content: "";
  position: absolute;
  left: -1px;
  bottom: 0;
  width: 1px;
  height: 7px;
  background-color: #fff;
}
.gz {
  position: relative;
  height: 16px;
  width: 61px;
  display: flex;
  align-items: center;
  gap: 7px;
  padding-left: 11px;
  font-family: "Liberation Mono", monospace;
  letter-spacing: -1.2px;
}
.gear {
  width: 12px;
  height: 12px;
  flex: none;
}
.gz.sel {
  margin-left: 7px;
  padding: 0 4px;
  width: 49px;
  background-color: #2b6bc4;
}
.gz.sel::before {
  left: -7px;
  width: 7px;
}

/* property panel */
.props {
  flex: 1;
  min-width: 0;
  display: flex;
  flex-direction: column;
  background-color: #fff;
  padding-top: 2px;
  border-right: 3px solid #f0f0f0;
}
.tabs {
  height: 20px;
  flex: none;
  border-bottom: 1px solid #d4d4d4;
}
.tab {
  display: inline-block;
  height: 20px;
  padding: 1px 8px 0 3px;
  border-right: 1px solid #d4d4d4;
  font-size: 13px;
}
.prop-body {
  flex: 1;
  min-height: 0;
  position: relative;
  padding: 5px 0 0 2px;
}
.prop-table {
  border-collapse: collapse;
  table-layout: fixed;
  width: 369px;
  border: 1px solid #c0c0c0;
}
.c-num { width: 22px; }
.c-name { width: 190px; }
.c-val { width: 126px; }
.c-add { width: 31px; }
.prop-table td,
.prop-table th {
  height: 18px;
  padding: 0;
  border: 1px solid #c8c8c8;
  font-weight: normal;
  overflow: hidden;
  white-space: nowrap;
}
.head th {
  height: 22px;
  background: linear-gradient(#fff, #ececec);
  font-size: 12px;
}
.prop-table .val-head {
  background: linear-gradient(#fbdc9f, #f2c064);
  color: #5c0a6b;
}
.num {
  background: linear-gradient(#fff, #ececec);
  text-align: center;
  font-family: "Liberation Mono", monospace;
}
.prop-table .name {
  padding-left: 18px;
}
.prop-table .val {
  padding-left: 1px;
}
.link {
  color: #0000e6;
}
.add {
  text-align: center;
}
.check {
  display: inline-block;
  width: 11px;
  height: 11px;
  border: 1px solid #444;
  vertical-align: middle;
}
.cur .num {
  background: #fdd79b;
  color: #7a1e8a;
}
.cur .name {
  background-color: #0078d7;
  color: #fff;
}
.cur .val {
  background-color: #d9e9f7;
}
.dim {
  color: #888;
}
.dim .num {
  color: #222;
}
.bar-sym {
  color: #555;
  font-weight: bold;
  padding: 0 1px;
}
.prop-table .group {
  padding-left: 3px;
}
.plus {
  display: inline-block;
  width: 11px;
  height: 11px;
  margin-right: 3px;
  border: 1px solid #b0b0b0;
  line-height: 10px;
  text-align: center;
  color: #222;
  vertical-align: middle;
}
.prop-scroll {
  position: absolute;
  right: 0;
  top: 0;
  bottom: 2px;
  width: 18px;
  display: flex;
  flex-direction: column;
  justify-content: space-between;
  align-items: center;
  padding: 3px 0 10px;
  box-sizing: border-box;
  background-color: #f5f5f5;
}
.prop-scroll svg {
  width: 9px;
  height: 9px;
}

/* status and task bars */
.status {
  height: 20px;
  flex: none;
  display: flex;
  gap: 2px;
  box-sizing: border-box;
  padding-top: 1px;
}
.st {
  border: 1px solid #dcdcdc;
  background-color: #f7f7f7;
  box-sizing: border-box;
  height: 19px;
  padding: 1px 0 0 2px;
  white-space: nowrap;
  flex: none;
}
.st-a { width: 148px; }
.st-b { width: 77px; }
.st-c { width: 98px; }
.st-d { width: 48px; }
.st-e { width: 913px; }
.st-f { flex: 1; }
.taskbar {
  height: 40px;
  flex: none;
  display: flex;
  align-items: stretch;
  background-color: #061216;
  color: #fff;
}
.start {
  width: 48px;
  flex: none;
  background-color: #000;
  display: flex;
  align-items: center;
  justify-content: center;
}
.start svg {
  width: 16px;
  height: 16px;
}
.task-search {
  width: 344px;
  flex: none;
  display: flex;
  align-items: center;
  background-color: #363636;
  color: #8c8c8c;
  font-size: 13px;
  padding-left: 10px;
  box-sizing: border-box;
}
.cortana {
  width: 13px;
  height: 13px;
  border: 3px solid #e4e4e4;
  border-radius: 50%;
  margin-right: 6px;
}
.mic {
  width: 12px;
  height: 18px;
  margin-left: auto;
  margin-right: 14px;
}
.task-apps {
  display: flex;
  gap: 10px;
  width: 443px;
  padding-left: 7px;
  flex: none;
  box-sizing: border-box;
}
.app {
  width: 39px;
  flex: none;
  display: flex;
  align-items: center;
  justify-content: center;
  box-sizing: border-box;
}
.app svg {
  width: 24px;
  height: 24px;
}
.app.edge {
  margin-left: 5px;
  color: #1e88e5;
  font-family: "DejaVu Sans", sans-serif;
  font-size: 34px;
  font-weight: bold;
  padding-bottom: 6px;
}
.app.active {
  margin-left: -5px;
  background-color: #2d3a42;
  border-bottom: 2px solid #76b9ed;
}
.app.run {
  border-bottom: 2px solid #76b9ed;
}
.app.first-run {
  margin-left: 4px;
}
.cpu,
.clock {
  display: flex;
  flex-direction: column;
  align-items: center;
  justify-content: center;
  gap: 1px;
  flex: none;
  color: #eee;
}
.cpu {
  width: 60px;
  margin-left: 151px;
}
.tray {
  display: flex;
  align-items: center;
  gap: 7px;
  margin-left: 13px;
  width: 182px;
  flex: none;
}
.tray svg {
  width: 16px;
  height: 16px;
  flex: none;
}
.tray .kbd {
  width: 24px;
  margin: 0 3px 0 2px;
}
.tray-ime {
  font-size: 14px;
  margin-right: 2px;
}
.clock {
  width: 64px;
  margin-left: -6px;
}
.notify {
  position: relative;
  margin-left: 24px;
  display: flex;
  align-items: center;
}
.notify svg {
  width: 15px;
  height: 16px;
}
.badge {
  position: absolute;
  left: 5px;
  top: 18px;
  width: 17px;
  height: 17px;
  border-radius: 50%;
  background-color: #444;
  border: 1px solid #222;
  box-sizing: border-box;
  text-align: center;
  font-weight: bold;
  line-height: 15px;
}

/* floating over the window */
.score-ball {
  position: absolute;
  left: 1114px;
  top: -30px;
  width: 48px;
  height: 48px;
  box-sizing: border-box;
  padding-top: 29px;
  border-radius: 50%;
  border: 2px solid #c8c8c8;
  background-color: #38b54a;
  box-shadow: 0 1px 3px rgba(0, 0, 0, 0.4);
  color: #fff;
  font-weight: bold;
  line-height: 14px;
  text-align: center;
}
.ime {
  position: absolute;
  left: 712px;
  top: 24px;
  width: 170px;
  height: 24px;
  box-sizing: border-box;
  display: flex;
  align-items: center;
  gap: 5px;
  padding-left: 16px;
  background-color: #fff;
  border: 1px solid #b9cde4;
}
.ime svg {
  width: 16px;
  height: 16px;
  flex: none;
}
.ime-zh {
  color: #1565c0;
  font-size: 15px;
  font-weight: bold;
  margin-right: 2px;
}
.sogou {
  width: 24px;
  height: 24px;
  flex: none;
  border-radius: 5px;
  background-color: #e8501e;
  color: #fff;
  font-size: 22px;
  font-weight: bold;
  line-height: 24px;
  text-align: center;
  transform: rotate(8deg);
}
.ime .sogou {
  position: absolute;
  left: -14px;
  top: 0;
}
.sogou-sm {
  width: 16px;
  height: 18px;
  font-size: 15px;
  line-height: 18px;
  border-radius: 3px;
}
.assist-ico {
  position: absolute;
  left: 881px;
  top: 29px;
  width: 10px;
  height: 16px;
}
.ring {
  position: absolute;
  left: 469px;
  top: 166px;
  width: 232px;
  height: 70px;
}

/* section editor window */
.sec-win {
  position: absolute;
  left: 731px;
  top: 132px;
  width: 609px;
  height: 572px;
  box-sizing: border-box;
  display: flex;
  flex-direction: column;
  border: 1px solid #444;
  background: linear-gradient(#9db6d2 0, #b9d1ea 32px);
  padding: 0 4px 7px 7px;
}
.sec-title {
  height: 32px;
  flex: none;
  padding-top: 12px;
  box-sizing: border-box;
  line-height: 14px;
}
.sec-inner {
  flex: 1;
  min-height: 0;
  display: flex;
  flex-direction: column;
  background-color: #f2f2f2;
  padding: 3px 2px 0 4px;
  white-space: nowrap;
}
.sec-tools,
.sec-info {
  height: 29px;
  flex: none;
  display: flex;
  align-items: center;
  gap: 10px;
  padding-left: 3px;
  background: linear-gradient(#fbfbfb, #f0f0f0);
}
.sec-info {
  height: 28px;
  gap: 2px;
}
.sec-tools .sep {
  height: 16px;
  margin: 0 -2px;
}
.grip {
  width: 2px;
  height: 16px;
  flex: none;
  margin-right: -4px;
  border-left: 2px dotted #aaa;
}
.sec-info .grip {
  margin-right: 3px;
}
.rebar-combo {
  width: 133px;
  height: 23px;
  box-sizing: border-box;
  display: flex;
  align-items: center;
  justify-content: space-between;
  padding: 0 5px 0 2px;
  border: 1px solid #777;
  color: #888;
}
.rebar-combo .caret {
  border-top-color: #777;
}
.sec-canvas {
  height: 442px;
  flex: none;
  box-sizing: border-box;
  border: 2px solid #f00;
  background-color: #000;
  margin-top: 1px;
}
.cad {
  display: block;
  width: 100%;
  height: 100%;
}
.grid {
  stroke: #484848;
  stroke-dasharray: 13 6 3 6;
  fill: none;
}
.axis {
  stroke: #777;
  stroke-dasharray: 13 6 3 6;
  fill: none;
}
.outline {
  stroke: #fff;
  stroke-width: 2;
  fill: none;
}
.leader {
  stroke: #fff;
  stroke-width: 1;
  fill: none;
}
.dim-line {
  stroke: #00f000;
  stroke-width: 2;
  fill: none;
}
.rebar {
  stroke: #f00;
  stroke-width: 3;
  fill: none;
}
.pin circle {
  fill: none;
  stroke-width: 1.5;
}
.yellow circle { stroke: #f5e11c; }
.cyan circle { stroke: #22e0e0; }
.magenta circle { stroke: #ff22ff; }
.cad-white {
  fill: #fff;
  font-size: 16px;
}
.cad-num {
  fill: #fff;
  font-family: Roboto, "Liberation Sans", sans-serif;
  font-size: 17px;
  font-weight: 300;
}
.cad-green {
  fill: #00f000;
  font-family: Roboto, "Liberation Sans", sans-serif;
  font-size: 16px;
  font-weight: 300;
}
.cad-grey {
  fill: #3a3a3a;
  font-size: 11px;
}
.sec-status {
  flex: 1;
  display: flex;
  gap: 2px;
  padding-top: 6px;
  font-family: "Liberation Mono", monospace;
  font-size: 11px;
  letter-spacing: -0.6px;
}
.coord,
.coord-rest {
  height: 20px;
  box-sizing: border-box;
  border: 1px solid #e4e4e4;
  padding: 2px 0 0 3px;
}
.coord {
  width: 144px;
}
.coord-rest {
  flex: 1;
}
```
